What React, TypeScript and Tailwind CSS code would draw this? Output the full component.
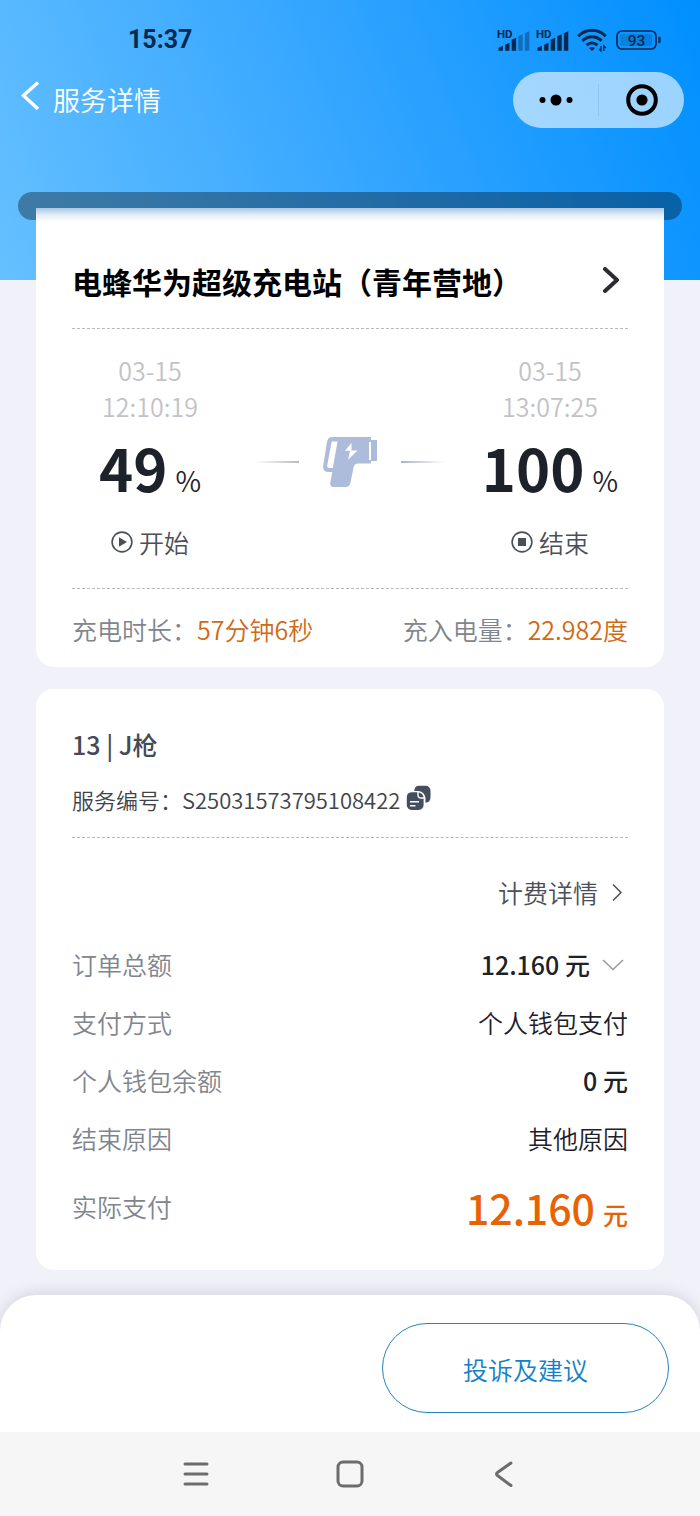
import type { ReactNode } from "react";

function SignalIcon({ bars }: { bars: number }) {
  const heights = [5, 8, 13, 16.5, 19.5];
  return (
    <svg width="34" height="24" viewBox="0 0 34 24" fill="#06294f">
      <text x="0" y="9.5" fontSize="11.5" fontWeight="700" fontFamily="Roboto, sans-serif">
        HD
      </text>
      {heights.map((h, i) => (
        <path
          key={h}
          d={`M${1.5 + i * 6.6} ${22.7}v${-(h - 2)}l4.4 -2v${h}z`}
          opacity={i < bars ? 1 : 0.4}
        />
      ))}
    </svg>
  );
}

function WifiIcon() {
  return (
    <svg width="30" height="24" viewBox="0 0 30 24" fill="none" stroke="#06294f" strokeWidth="3">
      <path d="M1.2 8.2C9 .2 21 .2 28.8 8.2" />
      <path d="M5.4 12.8c5.6-5.4 13.6-5.4 19.2 0" />
      <path d="M9.6 17.2c3.2-2.9 7.6-2.9 10.8 0" />
      <path d="M12 20c2-1.400 4-1.400 6 0L15 23z" fill="#06294f" stroke="none" />
      <path d="M24 18v5l-2-2M26.800 23v-5l2 2" strokeWidth="1.400" />
    </svg>
  );
}

function BatteryIcon() {
  return (
    <svg width="46" height="20" viewBox="0 0 46 20">
      <rect x="1" y="1" width="39" height="18" rx="5" fill="none" stroke="#06294f" strokeWidth="1.7" />
      <rect x="4" y="4" width="32" height="12" rx="2" fill="#06294f" opacity=".18" />
      <path d="M42.4 6.8h.8c1 0 1.4.6 1.4 1.4v3.6c0 .8-.4 1.4-1.4 1.4h-.8z" fill="#06294f" />
      <text
        x="20.5"
        y="15.5"
        textAnchor="middle"
        fontSize="15.5"
        fontWeight="500"
        fontFamily="Roboto, sans-serif"
        fill="#06294f"
      >
        93
      </text>
    </svg>
  );
}

function ChargerGunIcon() {
  return (
    <svg width="54" height="50" viewBox="0 0 54 50">
      <path
        fill="#aebcdc"
        fillRule="evenodd"
        d="M9.500 0H48v3h6v21h-6v2.500H35q-3.500 0-4.300 3.500L27.500 45.500q-1 4.500-5 4.500H11.500Q6.500 50 7.300 45.500L9.300 35H5.500Q-.6 35 .2 28.500L4 5Q4.800 0 9.500 0zM8.700 4.500 4.200 28.500Q3.800 31 6 31h3.800L14.500 4.500zM46 5v18h2V5zM28.500 6 22 13.800h5l-1.800 9L34.500 13.500h-6z"
      />
    </svg>
  );
}

function CopyIcon() {
  return (
    <svg width="26" height="26" viewBox="0 0 26 26">
      <path d="M13 .8h6.500a5 5 0 0 1 5 5v6.500c0 3.500-1.800 5.300-5 5.500V13C19 9 16 6 12 6H8.200C8.500 2.700 10 .8 13 .8z" fill="#454e5c" />
      <path
        d="M5.500 7.200h5.800v2.600c0 2.600 1.200 4 4 4h2.300V20a5 5 0 0 1-5 5H5.500A5 5 0 0 1 .8 20v-8a5 5 0 0 1 4.700-4.800z"
        fill="#454e5c"
      />
      <path d="M12.700 7.500c2.600.4 4.300 2 4.900 4.800h-2.300c-1.800 0-2.600-.8-2.600-2.600z" fill="#454e5c" />
      <path d="M4 16.800h9M4 20.700h5.500" stroke="#fff" strokeWidth="1.500" />
    </svg>
  );
}

interface EndpointProps {
  date: string;
  time: string;
  percent: number;
  label: string;
  icon: ReactNode;
}

function Endpoint({ date, time, percent, label, icon }: EndpointProps) {
  return (
    <div className="flex w-[156px] flex-col items-center">
      <time className="text-center leading-9 text-[#c2c3c6]">
        {date}
        <br />
        {time}
      </time>
      <p className="flex h-[90px] items-baseline gap-2 leading-[86px] whitespace-nowrap text-[#1d2129]">
        <span className="text-[58px] font-bold">{percent}</span>
        <span className="text-[28px]">%</span>
      </p>
      <p className="mt-2.5 flex h-9 items-center gap-1.5 leading-9 text-[#4b5058]">
        {icon}
        {label}
      </p>
    </div>
  );
}

function Row({ label, children }: { label: string; children: ReactNode }) {
  return (
    <div className="flex h-[58px] items-center justify-between">
      <dt className="text-[#80858e]">{label}</dt>
      <dd className="flex items-center text-[#1d2129]">{children}</dd>
    </div>
  );
}

export default function App() {
  return (
    <div
      lang="zh-CN"
      className="flex min-h-screen flex-col bg-[#f1f1fa] font-['Noto_Sans_CJK_SC',sans-serif] text-[25px] font-[350]"
    >
      <main className="bg-[linear-gradient(68deg,#66c0ff,#35a6ff_50%,#008fff)] bg-[length:100%_280px] bg-no-repeat">
        <div className="flex h-[72px] items-center justify-between pt-2 pr-[38px] pl-32">
          <span className="font-[Roboto,sans-serif] text-[25px] font-bold text-[#06294f]">15:37</span>
          <div className="flex items-center">
            <SignalIcon bars={3} />
            <span className="ml-[5px]">
              <SignalIcon bars={5} />
            </span>
            <span className="ml-[7px]">
              <WifiIcon />
            </span>
            <span className="ml-[9px]">
              <BatteryIcon />
            </span>
          </div>
        </div>

        <header className="flex h-14 items-center justify-between pr-4 pl-5">
          <button className="flex items-center gap-3 text-white">
            <svg width="21" height="40" viewBox="0 0 21 40" fill="none" stroke="#fff" strokeWidth="3.400">
              <path d="M18 2.500 3.500 15.500 18 29" />
            </svg>
            <h1 className="text-[27px] leading-9">服务详情</h1>
          </button>
          <div className="flex h-14 w-[171px] items-center rounded-full bg-white/60">
            <button aria-label="更多" className="flex flex-1 justify-center">
              <svg width="34" height="12" viewBox="0 0 34 12">
                <circle cx="3.500" cy="6" r="3" />
                <circle cx="17" cy="6" r="5.500" />
                <circle cx="30.500" cy="6" r="3" />
              </svg>
            </button>
            <span className="h-8 w-px bg-[#8ec6f2]" />
            <button aria-label="关闭" className="flex flex-1 justify-center">
              <svg width="32" height="32" viewBox="0 0 32 32">
                <circle cx="16" cy="16" r="13.800" fill="none" stroke="#000" strokeWidth="4" />
                <circle cx="16" cy="16" r="5.600" />
              </svg>
            </button>
          </div>
        </header>

        {/* printer slot the receipt card slides out of */}
        <div className="mx-[18px] mt-16 h-7 rounded-full bg-black/35" />

        <section className="relative mx-9 -mt-3 rounded-b-[18px] bg-[linear-gradient(#a9c6e2,#e4edf6_7px,#fff_14px)] px-9">
          <div className="flex items-center justify-between border-b border-dashed border-[#b8b8b8] pt-[52px] pb-[26px]">
            <h2 className="text-[30px] leading-[42px] font-bold text-black">电蜂华为超级充电站（青年营地）</h2>
            <button aria-label="站点详情" className="mr-2">
              <svg width="18" height="28" viewBox="0 0 18 28" fill="none" stroke="#2b2c30" strokeWidth="4" strokeLinecap="round" strokeLinejoin="round">
                <path d="M3 2 15 13 3 24" />
              </svg>
            </button>
          </div>

          <div className="flex border-b border-dashed border-[#b8b8b8] pt-[23px] pb-7">
            <Endpoint
              date="03-15"
              time="12:10:19"
              percent={49}
              label="开始"
              icon={
                <svg width="22" height="22" viewBox="0 0 22 22">
                  <circle cx="11" cy="11" r="9.900" fill="none" stroke="#4b5058" strokeWidth="1.600" />
                  <path d="M8 6.200 16 11l-8 4.800z" fill="#4b5058" />
                </svg>
              }
            />
            <div className="flex flex-1 items-center justify-center gap-6 pt-3">
              <span className="h-0.5 w-11 bg-linear-to-r from-transparent to-[#b8b9bd]" />
              <ChargerGunIcon />
              <span className="h-0.5 w-11 bg-linear-to-l from-transparent to-[#a9b2c6]" />
            </div>
            <Endpoint
              date="03-15"
              time="13:07:25"
              percent={100}
              label="结束"
              icon={
                <svg width="22" height="22" viewBox="0 0 22 22">
                  <circle cx="11" cy="11" r="9.900" fill="none" stroke="#4b5058" strokeWidth="1.600" />
                  <rect x="7" y="7" width="8" height="8" fill="#4b5058" />
                </svg>
              }
            />
          </div>

          <div className="flex h-[78px] items-center justify-between pt-1 text-[#80858e]">
            <p>
              充电时长：<span className="text-[#cf6a16]">57分钟6秒</span>
            </p>
            <p>
              充入电量：<span className="text-[#cf6a16]">22.982度</span>
            </p>
          </div>
        </section>

        <section className="mx-9 mt-[22px] rounded-[18px] bg-white px-9 pt-9 pb-6">
          <h2 className="leading-[38px] font-medium text-[#454b55]">13 | J枪</h2>
          <div className="mt-[18px] flex h-[57px] items-start border-b border-dashed border-[#b8b8b8]">
            <p className="text-[22px] leading-9 text-[#3f444c]">服务编号：S25031573795108422</p>
            <button aria-label="复制服务编号" className="mt-1 ml-1.5">
              <CopyIcon />
            </button>
          </div>

          <div className="mt-9 flex justify-end">
            <button className="flex h-[38px] items-center gap-3 pr-1 text-[#4b5058]">
              计费详情
              <svg width="14" height="20" viewBox="0 0 14 20" fill="none" stroke="#4b5058" strokeWidth="1.500">
                <path d="M3 1.500 11 9.500 3 17.500" />
              </svg>
            </button>
          </div>

          <dl className="mt-6">
            <Row label="订单总额">
              <button className="flex items-center gap-3 pr-1 font-medium">
                12.160 元
                <svg width="22" height="14" viewBox="0 0 22 14" fill="none" stroke="#9a9ca1" strokeWidth="1.600">
                  <path d="M1 2 11 11.500 21 2" />
                </svg>
              </button>
            </Row>
            <Row label="支付方式">个人钱包支付</Row>
            <Row label="个人钱包余额">
              <span className="font-medium">0 元</span>
            </Row>
            <Row label="结束原因">其他原因</Row>
            <div className="flex h-[78px] items-center justify-between">
              <dt className="text-[#80858e]">实际支付</dt>
              <dd className="flex items-baseline gap-2 font-medium text-[#e86204]">
                <span className="text-[41px] leading-[60px]">12.160</span>
                <span>元</span>
              </dd>
            </div>
          </dl>
        </section>
      </main>

      <footer className="mt-[25px] flex justify-end rounded-t-[36px] bg-white px-[31px] pt-7 pb-[19px] shadow-[0_-2px_16px_rgba(0,0,0,0.12)]">
        <button className="h-[90px] w-[287px] rounded-full border border-[#2484bd] pt-1 text-[#1480c8]">
          投诉及建议
        </button>
      </footer>

      <nav className="flex h-[84px] items-center justify-center gap-[126px] bg-[#f6f6f6] text-[#6c6c6c]">
        <button aria-label="最近任务">
          <svg width="28" height="28" viewBox="0 0 28 28" stroke="currentColor" strokeWidth="3" strokeLinecap="round">
            <path d="M3 4h22M3 14h22M3 24h22" />
          </svg>
        </button>
        <button aria-label="主屏幕">
          <svg width="28" height="28" viewBox="0 0 28 28" fill="none" stroke="currentColor" strokeWidth="3">
            <rect x="2" y="2" width="24" height="24" rx="5" />
          </svg>
        </button>
        <button aria-label="返回">
          <svg width="28" height="28" viewBox="0 0 28 28" fill="none" stroke="currentColor" strokeWidth="3" strokeLinecap="round" strokeLinejoin="round">
            <path d="M21 3 7.500 12.500q-2 1.500 0 3L21 25.500" />
          </svg>
        </button>
      </nav>
    </div>
  );
}
